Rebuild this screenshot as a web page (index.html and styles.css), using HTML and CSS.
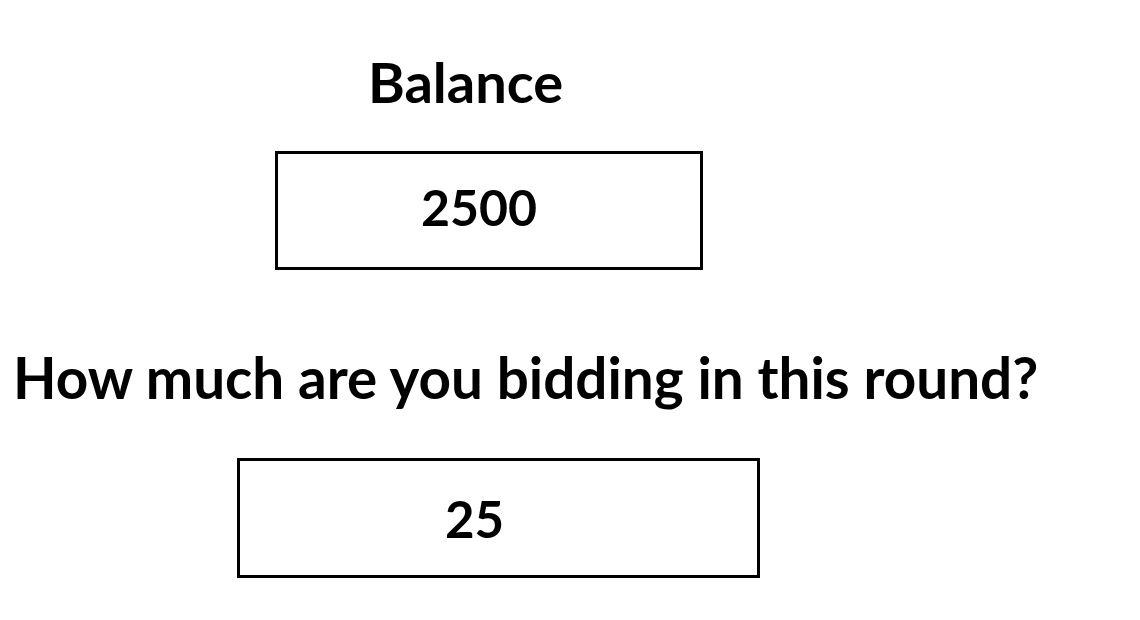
FILE: index.html
```html
<!doctype html>
<html lang="en">
  <head>
    <meta charset="UTF-8" />
    <meta name="viewport" content="width=device-width, initial-scale=1.0" />
    <title>Bidding Round</title>
    <link rel="stylesheet" href="styles.css">
  </head>
  <body>
    <div class="bid-page">
      <h1 class="balance-title">Balance</h1>

      <div class="value-box balance-box">
        <span class="value-text">2500</span>
      </div>

      <h2 class="bid-question">How much are you bidding in this round?</h2>

      <div class="value-box bid-box">
        <span class="value-text">25</span>
      </div>
    </div>
  </body>
</html>
```

FILE: styles.css
```css
* {
  box-sizing: border-box;
  margin: 0;
  padding: 0;
  font-family: "Lato", "Open Sans", sans-serif;
}

body {
  background-color: #ffffff;
  color: #000000;
}

.bid-page {
  display: flex;
  flex-direction: column;
  align-items: flex-start;
  width: 1140px;
  height: 620px;
}

.balance-title {
  margin: 54px 0 0 368px;
  font-size: 56px;
  font-weight: 700;
  line-height: 1;
}

.value-box {
  border: 3px solid #000000;
  background-color: #ffffff;
}

.value-text {
  display: block;
  font-weight: 700;
  line-height: 1;
}

.balance-box {
  margin: 41px 0 0 275px;
  width: 428px;
  height: 119px;
  padding: 28px 0 0 143px;
  font-size: 50px;
}

.bid-question {
  margin: 79px 0 0 13px;
  font-size: 56.6px;
  font-weight: 700;
  line-height: 1;
  white-space: nowrap;
}

.bid-box {
  margin: 52px 0 0 237px;
  width: 523px;
  height: 120px;
  padding: 32px 0 0 205px;
  font-size: 51px;
}
```
